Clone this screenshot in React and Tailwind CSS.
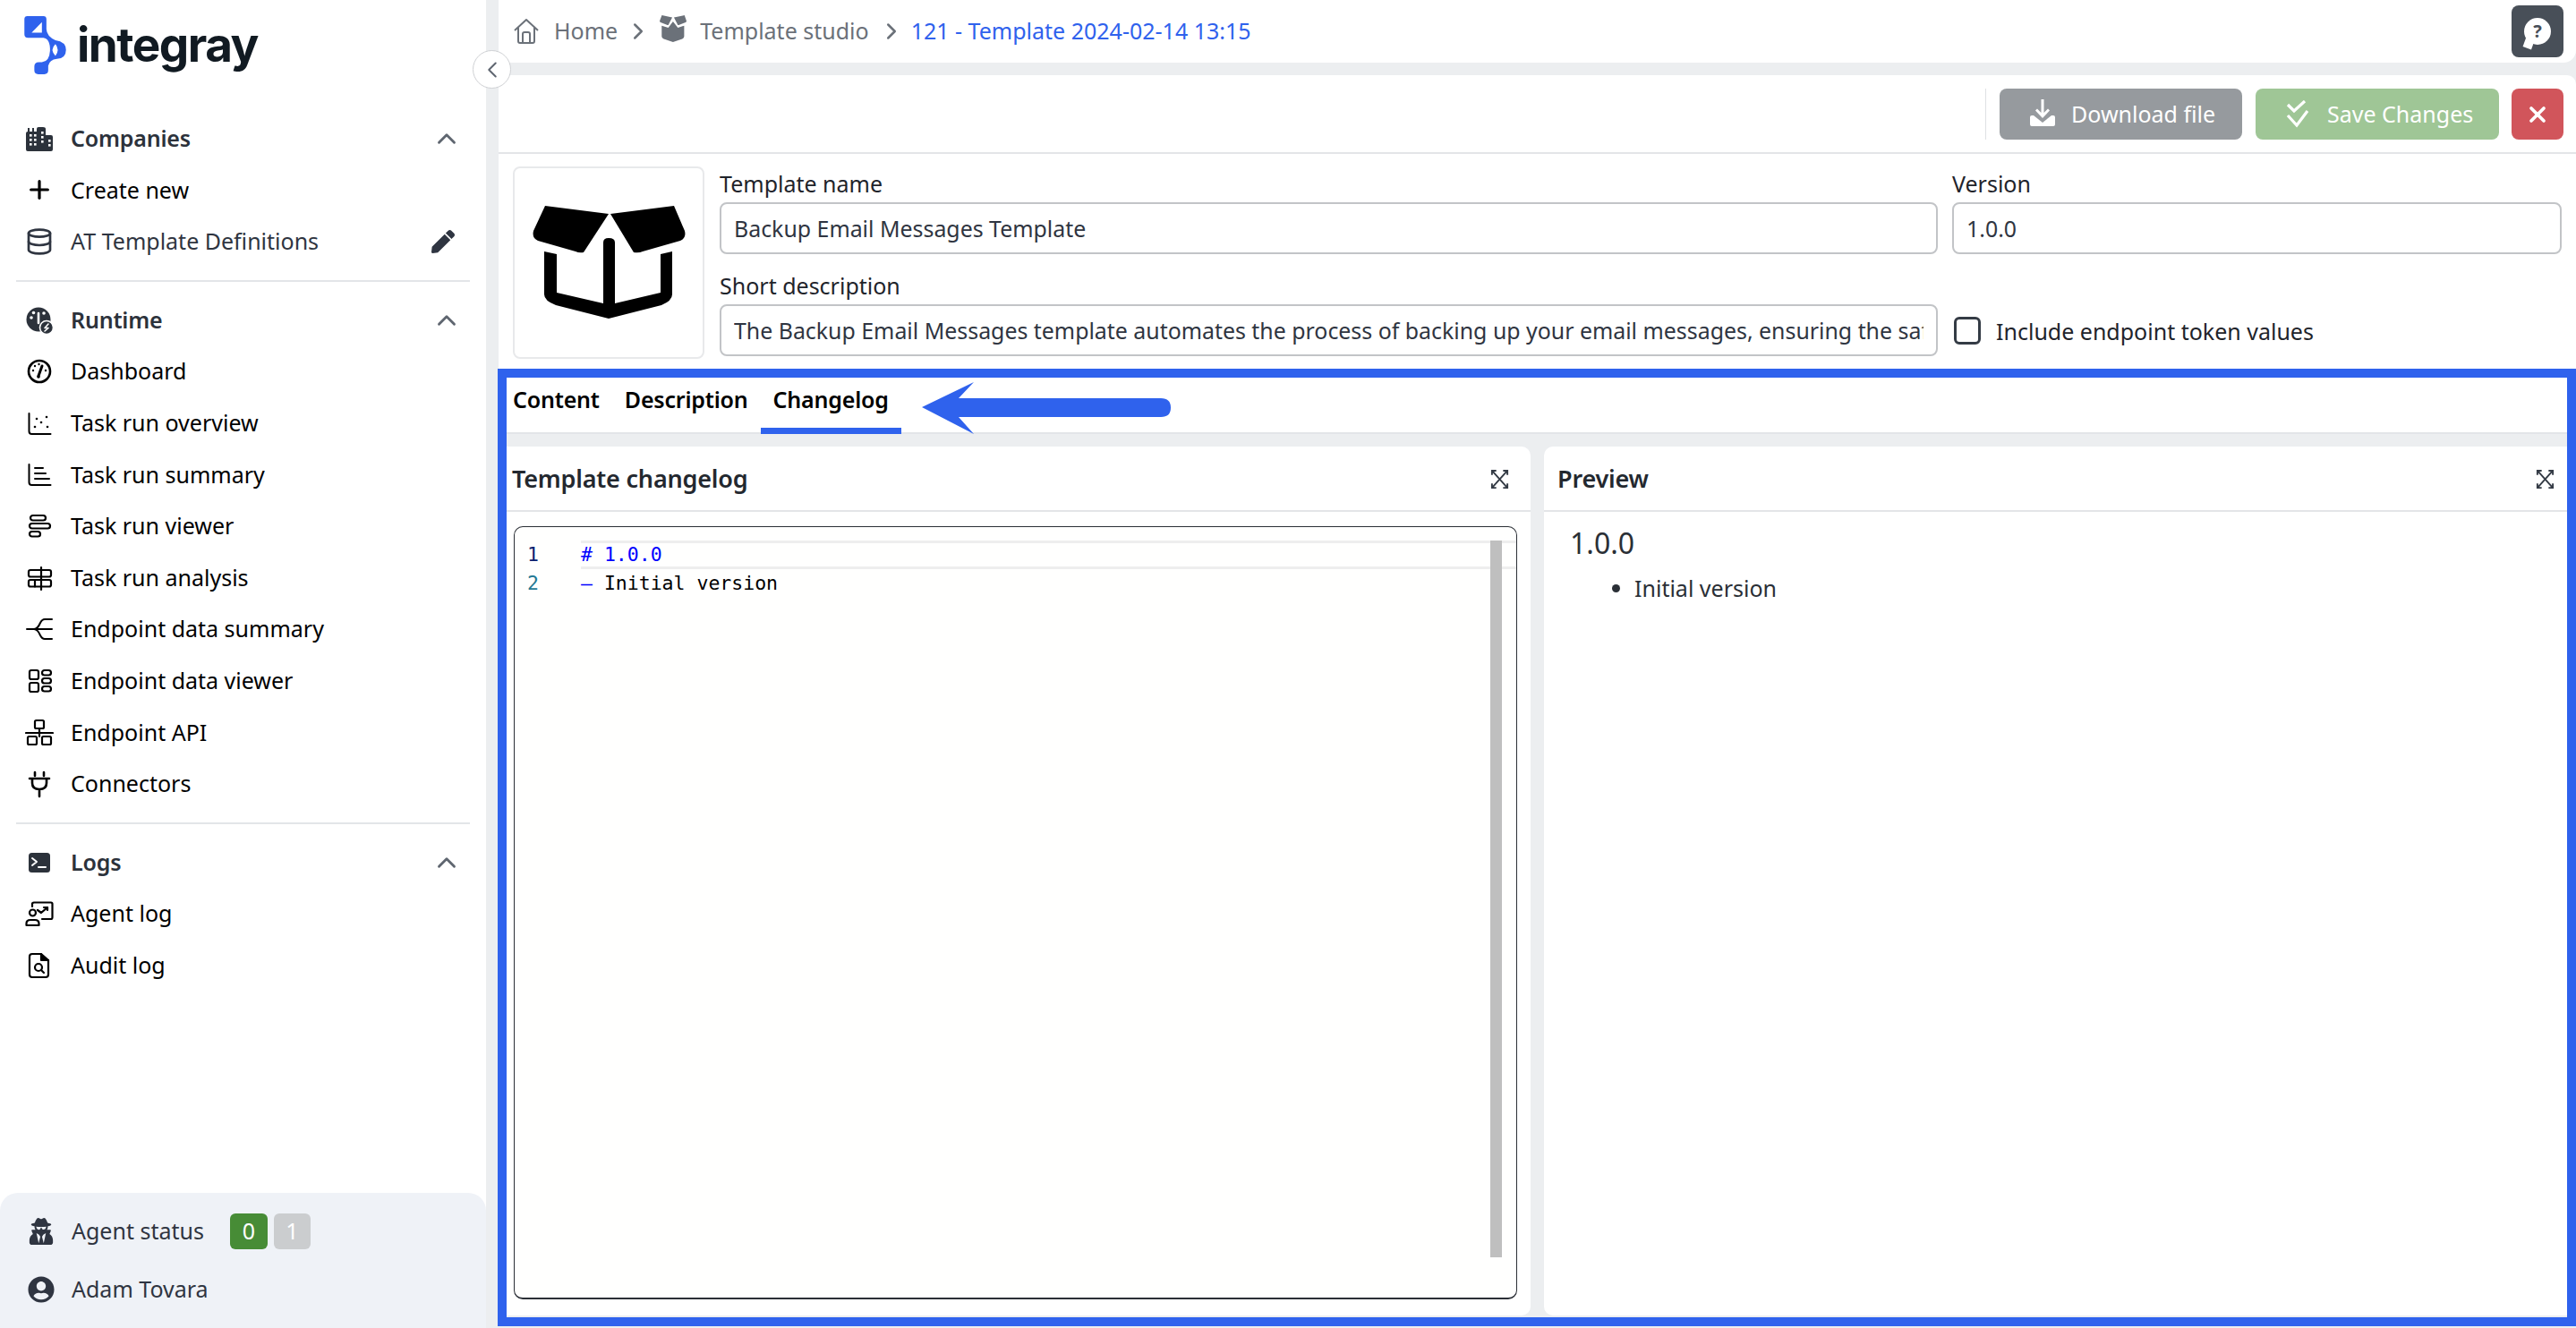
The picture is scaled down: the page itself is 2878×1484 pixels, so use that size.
import React from "react";
import { ChevronLeft, ChevronRight, ChevronUp, Database, Plus, X } from "lucide-react";
import { FaPen, FaUserCircle, FaUserSecret } from "react-icons/fa";

const BLUE = "#2f62ed";

// icons all sit in a 32 box so the labels line up
const Svg = ({ children, className = "w-8 h-8" }) => (
  <svg viewBox="0 0 32 32" className={`${className} shrink-0`} fill="none" stroke="currentColor" strokeWidth="2.2" strokeLinecap="round" strokeLinejoin="round">
    {children}
  </svg>
);

const CompaniesIcon = () => {
  const dots = [[5, 11], [10, 11], [5, 16], [10, 16], [5, 21], [10, 21], [18, 8], [18, 13], [18, 18], [26, 17], [26, 22]];
  return (
    <Svg>
      <path stroke="none" fill="currentColor" d="M1 28V10Q1 8 3 8H3V4H5V8H8V4H10V8H13V5Q13 3 15 3H20Q23 3 23 5V12H29Q31 12 31 14V28Q31 30 29 30H3Q1 30 1 28Z" />
      {dots.map(([x, y]) => (
        <rect key={`${x}-${y}`} x={x} y={y} width="2.6" height="2.6" fill="#fff" stroke="none" />
      ))}
    </Svg>
  );
};

const RuntimeIcon = () => (
  <Svg>
    <circle cx="15" cy="15" r="13.5" fill="currentColor" stroke="none" />
    <path d="M15 8V19" stroke="#fff" strokeWidth="2.6" />
    <circle cx="7" cy="13" r="1.8" fill="#fff" stroke="none" />
    <circle cx="9.5" cy="7.5" r="1.8" fill="#fff" stroke="none" />
    <circle cx="21" cy="8" r="1.8" fill="#fff" stroke="none" />
    <circle cx="24" cy="24" r="7.5" fill="currentColor" stroke="#fff" strokeWidth="1.6" />
    <path d="M26 20 22 24.500H26L22 28" stroke="#fff" strokeWidth="1.6" />
  </Svg>
);

const DashboardIcon = () => (
  <Svg>
    <circle cx="16" cy="16" r="12" strokeWidth="2.6" />
    <path d="M15 21 19 10" strokeWidth="3" />
    <circle cx="15" cy="22" r="1.8" fill="currentColor" stroke="none" />
    <circle cx="9" cy="15" r="1.2" fill="currentColor" stroke="none" />
    <circle cx="11" cy="10" r="1.2" fill="currentColor" stroke="none" />
    <circle cx="15.500" cy="8" r="1.2" fill="currentColor" stroke="none" />
    <circle cx="23" cy="15" r="1.2" fill="currentColor" stroke="none" />
  </Svg>
);

const OverviewIcon = () => (
  <Svg>
    <path d="M4.500 5V25Q4.500 28 7.500 28H28.500" strokeWidth="2" />
    <g fill="currentColor" stroke="none">
      <circle cx="13" cy="11" r="1.300" /><circle cx="24" cy="9" r="1.300" /><circle cx="18" cy="15" r="1.300" />
      <circle cx="11" cy="20" r="1.300" /><circle cx="25" cy="20" r="1.300" />
    </g>
  </Svg>
);

const SummaryIcon = () => (
  <Svg>
    <path d="M4.500 5V25Q4.500 28 7.500 28H28.500" strokeWidth="2" />
    <path d="M11 9H20M11 15H23M11 21H27" strokeWidth="2" />
  </Svg>
);

const ViewerIcon = () => (
  <Svg>
    <rect x="6" y="4" width="17" height="5.500" rx="2.750" />
    <rect x="5" y="13" width="23" height="5.500" rx="2.750" />
    <rect x="5" y="22" width="12" height="5.500" rx="2.750" />
  </Svg>
);

const AnalysisIcon = () => (
  <Svg>
    <rect x="4" y="7" width="25" height="7.500" rx="2" />
    <rect x="4" y="18" width="25" height="7.500" rx="2" />
    <path d="M18 4V29M11 18V25.500" />
  </Svg>
);

const DataSummaryIcon = () => (
  <Svg>
    <path d="M2 16H30M30 5H22Q19 5 17 9 14 16 10 16 14 16 17 23 19 27 22 27H30" strokeWidth="2" />
  </Svg>
);

const DataViewerIcon = () => (
  <Svg>
    <rect x="5" y="4" width="10" height="10" rx="2" />
    <rect x="5" y="18" width="10" height="10" rx="2" />
    <rect x="19" y="4" width="10" height="5.500" rx="2.750" />
    <rect x="19" y="13" width="10" height="5.500" rx="2.750" />
    <rect x="19" y="22" width="10" height="5.500" rx="2.750" />
  </Svg>
);

const ApiIcon = () => (
  <Svg>
    <rect x="11" y="3" width="10" height="9" rx="1.500" />
    <rect x="3" y="21" width="10" height="9" rx="1.500" />
    <rect x="19" y="21" width="10" height="9" rx="1.500" />
    <path d="M16 12V21M1 17H31" />
  </Svg>
);

const PlugIcon = () => (
  <Svg>
    <path d="M11 3V7M21 3V7M5 10H27M8 10V15Q8 22 16 22 24 22 24 15V10M16 22V30" strokeWidth="2.600" />
  </Svg>
);

const TerminalIcon = () => (
  <Svg>
    <rect x="4" y="5" width="24" height="22" rx="3.500" fill="currentColor" stroke="none" />
    <path d="M8 11 13 15 8 19M15 21H23" stroke="#fff" strokeWidth="2" />
  </Svg>
);

const AgentLogIcon = () => (
  <Svg>
    <circle cx="8.500" cy="15" r="3.500" />
    <path d="M1.500 29V27Q1.500 23 6 23H11Q15.500 23 15.500 27V29Z" />
    <path d="M8 8V5Q8 3.500 10 3.500H29Q30.500 3.500 30.500 5V20Q30.500 22 29 22H19" />
    <path d="M14 12 18 15 25 9M21 9H25V12" />
  </Svg>
);

const AuditIcon = () => (
  <Svg>
    <path d="M8 3H18L26 10V26Q26 29 23 29H8Q5 29 5 26V6Q5 3 8 3Z" />
    <path d="M18 3V10H26" fill="currentColor" />
    <circle cx="15" cy="18" r="4" />
    <path d="M18 21 21 24" />
  </Svg>
);

const ExpandIcon = () => (
  <svg viewBox="0 0 24 24" className="w-[23px] h-[23px]" fill="none" stroke="#343b45" strokeWidth="2">
    <path d="M3 7V2H8M16 2H21V7M21 17V22H16M8 22H3V17M3 2 21 22M21 2 3 22" />
  </svg>
);

// open box used for the template picture
const BoxIcon = ({ className, fill }) => (
  <svg viewBox="0 0 171 126" className={className} fill={fill}>
    <path d="M14 0 85 9 57 52 Q52 53 48 51 L6 39 Q-1 36 1 28Z" />
    <path d="M87 9 158 0 170 28 Q172 36 165 39 L123 51 Q119 53 113 52Z" />
    <path d="M13 51V99Q13 106 26 111L85 126 144 111Q156 106 156 99V51L143 54V97L92 109V41Q92 36 85 36 79 36 79 41V109L27 97V54Z" />
  </svg>
);

// breadcrumb version: same flaps, solid body
const SmallBoxIcon = () => (
  <svg viewBox="0 0 171 170" className="w-[30px] h-[30px]" fill="#6b7179">
    <path d="M14 0 80 14 55 62 Q50 63 46 61 L6 45 Q-1 42 1 34Z" />
    <path d="M91 14 158 0 170 34 Q172 42 165 45 L125 61 Q121 63 116 62Z" />
    <path d="M13 66 L55 80 85 40 116 80 156 66V135Q156 145 144 150L85 170 26 150Q13 145 13 135Z" />
  </svg>
);

const LogoMark = () => (
  <svg viewBox="22 25 138 193" className="w-[47px] h-[65px] shrink-0">
    <path fill={BLUE} d="M32 25H85Q95 25 95 35V68Q96 92 125 105 160 110 160 137 160 165 130 167 105 170 101 190V205Q101 218 88 218H68Q55 218 55 205V192Q55 178 70 178H80Q105 176 107 140 108 100 85 97H34Q22 97 22 85V35Q22 25 32 25Z" />
    <path fill="#fff" d="M46 80 80 45V80Z" />
    <path fill="#fff" d="M125 118Q105 137 125 157 140 137 125 118Z" />
  </svg>
);

const Section = ({ icon, label }) => (
  <div className="flex items-center h-[57.6px] pl-[28px] text-[#2c323b]">
    {icon}
    <span className="ml-[19px] font-semibold tracking-[-0.2px]">{label}</span>
    <ChevronUp className="ml-auto mr-[27px] w-[34px] h-[34px] text-[#5f6670]" strokeWidth={2} />
  </div>
);

const Item = ({ icon, label, muted, children }) => (
  <div className={`flex items-center h-[57.6px] pl-[28px] ${muted ? "text-[#2f3541]" : "text-black"}`}>
    {icon}
    <span className="ml-[19px]">{label}</span>
    {children}
  </div>
);

const Divider = () => <div className="mx-[18px] h-[2px] bg-[#e3e5e8] my-[14px]" />;

function Sidebar() {
  return (
    <aside className="w-[543px] shrink-0 h-full bg-white flex flex-col text-[25px]">
      <div className="h-[126px] shrink-0 flex items-start pl-[27px] pt-[18px] gap-[12px]">
        <LogoMark />
        <span className="font-['Inter',sans-serif] font-bold text-[53px] leading-[64px] text-[#111a22] tracking-[-1.5px]">integray</span>
      </div>
      <Section icon={<CompaniesIcon />} label="Companies" />
      <Item icon={<Plus className="w-8 h-8" strokeWidth={2.4} />} label="Create new" />
      <Item muted icon={<Database className="w-8 h-8" strokeWidth={2} />} label="AT Template Definitions">
        <FaPen className="ml-auto mr-[35px] w-[26px] h-[26px] text-[#2f3541]" />
      </Item>
      <Divider />
      <Section icon={<RuntimeIcon />} label="Runtime" />
      <Item icon={<DashboardIcon />} label="Dashboard" />
      <Item icon={<OverviewIcon />} label="Task run overview" />
      <Item icon={<SummaryIcon />} label="Task run summary" />
      <Item icon={<ViewerIcon />} label="Task run viewer" />
      <Item icon={<AnalysisIcon />} label="Task run analysis" />
      <Item icon={<DataSummaryIcon />} label="Endpoint data summary" />
      <Item icon={<DataViewerIcon />} label="Endpoint data viewer" />
      <Item icon={<ApiIcon />} label="Endpoint API" />
      <Item icon={<PlugIcon />} label="Connectors" />
      <Divider />
      <Section icon={<TerminalIcon />} label="Logs" />
      <Item icon={<AgentLogIcon />} label="Agent log" />
      <Item icon={<AuditIcon />} label="Audit log" />
      <div className="mt-auto h-[151px] rounded-t-[20px] bg-[#eff2f7] text-[#2f3541] pl-[31px] pt-[23px]">
        <div className="flex items-center h-[40px]">
          <FaUserSecret className="w-[30px] h-[30px]" />
          <span className="ml-[19px]">Agent status</span>
          <span className="ml-[29px] w-[42px] h-[40px] rounded-[6px] bg-[#478c36] text-white flex items-center justify-center">0</span>
          <span className="ml-[7px] w-[41px] h-[40px] rounded-[6px] bg-[#cbcdcf] text-white flex items-center justify-center">1</span>
        </div>
        <div className="flex items-center h-[40px] mt-[25px]">
          <FaUserCircle className="w-[30px] h-[30px]" />
          <span className="ml-[19px]">Adam Tovara</span>
        </div>
      </div>
    </aside>
  );
}

const Crumb = () => <ChevronRight className="w-[30px] h-[30px] mx-[2px] text-[#6b7179]" strokeWidth={2} />;

function TopBar() {
  return (
    <header className="h-[70px] shrink-0 bg-white rounded-br-[14px] flex items-center pl-[16px] pr-[14px] text-[25px] text-[#6b7179]">
      <svg viewBox="0 0 30 32" className="w-[30px] h-[32px]" fill="none" stroke="currentColor" strokeWidth="2" strokeLinejoin="round">
        <path d="M2 15 15 3 28 15M6 12V27Q6 29 8 29H22Q24 29 24 27V12M11 29V19Q11 17 13 17H17Q19 17 19 19V29" />
      </svg>
      <span className="ml-[16px]">Home</span>
      <span className="ml-[6px]"><Crumb /></span>
      <span className="ml-[7px] mb-[6px]"><SmallBoxIcon /></span>
      <span className="ml-[15px]">Template studio</span>
      <span className="ml-[8px]"><Crumb /></span>
      <span className="ml-[5px] text-[#2f62ed]">121 - Template 2024-02-14 13:15</span>
      <button className="ml-auto w-[58px] h-[58px] rounded-[8px] bg-[#484f58] flex items-center justify-center">
        <span className="relative flex w-[30px] h-[30px] rounded-full bg-white items-center justify-center text-[20px] leading-none font-bold text-[#484f58]">
          ?
          <span className="absolute left-0 bottom-[-4px] w-[10px] h-[10px] bg-white rotate-[20deg]" />
        </span>
      </button>
    </header>
  );
}

function Toolbar() {
  return (
    <div className="h-[88px] shrink-0 border-b-2 border-[#e3e5e8] flex justify-end items-start pt-[15px] pr-[14px] text-[25px] text-white">
      <div className="w-px h-[57px] bg-[#dfe1e4] mr-[15px]" />
      <button className="w-[271px] h-[57px] rounded-[8px] bg-[#969a9e] flex items-center pl-[33px]">
        <svg viewBox="0 0 30 32" className="w-[30px] h-[32px] mb-[4px]" fill="#fff">
          <path d="M13.500 1H16.500V16L21 11.500 23 13.500 15 22 7 13.500 9 11.500 13.500 16Z" />
          <path d="M1 21Q1 19 3 19H5L15 27 25 19H27Q29 19 29 21V29Q29 31 27 31H3Q1 31 1 29Z" />
        </svg>
        <span className="ml-[17px]">Download file</span>
      </button>
      <button className="ml-[15px] w-[272px] h-[57px] rounded-[8px] bg-[#9fc696] flex items-center pl-[34px]">
        <svg viewBox="0 0 26 32" className="w-[26px] h-[32px]" fill="none" stroke="#fff" strokeWidth="3.200">
          <path d="M2 5 9 12 21 1M2 17 12 28 24 12" />
        </svg>
        <span className="ml-[20px]">Save Changes</span>
      </button>
      <button className="ml-[14px] w-[58px] h-[57px] rounded-[8px] bg-[#d1555b] flex items-center justify-center">
        <X className="w-[28px] h-[28px]" strokeWidth={3.2} />
      </button>
    </div>
  );
}

const Field = ({ label, value }) => (
  <div className="flex flex-col">
    <label className="h-[34px] leading-[27px]">{label}</label>
    <input
      readOnly
      value={value}
      className="h-[58px] w-full rounded-[8px] border-2 border-[#c2c4c7] px-[14px] text-[24.9px] text-[#2f3541] bg-white outline-none"
    />
  </div>
);

function TemplateForm() {
  return (
    <div className="h-[240px] shrink-0 flex pl-[16px] pt-[14px] text-[25px] text-[#1f242b]">
      <div className="w-[214px] h-[215px] rounded-[8px] border-2 border-[#e8e9eb] flex items-center justify-center">
        <BoxIcon className="w-[171px] h-[126px] mt-[-2px]" fill="#000" />
      </div>
      <div className="ml-[17px] grid grid-cols-[1361px_681px] gap-x-[16px] gap-y-[22px] pt-[6px] content-start">
        <Field label="Template name" value="Backup Email Messages Template" />
        <Field label="Version" value="1.0.0" />
        <Field label="Short description" value="The Backup Email Messages template automates the process of backing up your email messages, ensuring the safety and accessibility of your communications." />
        <div className="flex items-center h-[58px] mt-[34px] pl-[2px]">
          <span className="w-[30px] h-[31px] rounded-[6px] border-[3px] border-[#343b45] bg-white" />
          <span className="ml-[17px] mt-[4px]">Include endpoint token values</span>
        </div>
      </div>
    </div>
  );
}

function Tabs() {
  const tabs = ["Content", "Description", "Changelog"];
  return (
    <div className="h-[73px] shrink-0 bg-white border-b-2 border-[#e3e5e8] flex pl-[2px] text-[25px] font-semibold tracking-[-0.2px] text-black">
      {tabs.map((t) => (
        <div
          key={t}
          className={`h-[73px] px-[14px] pt-[4px] flex items-center border-b-[7px] ${t === "Changelog" ? "border-[#2f62ed]" : "border-transparent"}`}
        >
          {t}
        </div>
      ))}
    </div>
  );
}

const PanelHead = ({ title }) => (
  <div className="h-[73px] shrink-0 border-b-2 border-[#e3e5e8] flex items-center justify-between pl-[15px] pr-[23px] pt-[2px] text-[27px] font-semibold tracking-[-0.2px] text-[#23282f]">
    <span>{title}</span>
    <ExpandIcon />
  </div>
);

function Editor() {
  return (
    <div className="relative flex-1 mt-[16px] ml-[17px] mr-[15px] mb-[18px] rounded-[10px] border border-b-2 border-[#2b2f36] bg-[#fffffe] pt-[15px] font-['DejaVu_Sans_Mono',monospace] text-[21.5px]">
      <div className="flex h-[32px] items-center">
        <span className="w-[74px] pl-[14px] shrink-0 text-[#0b216f]">1</span>
        <span className="flex-1 h-[32px] leading-[26px] border-y-[3px] border-[#eeeeee] text-[#0000ff] whitespace-pre"># 1.0.0</span>
      </div>
      <div className="flex h-[32px] items-center">
        <span className="w-[74px] pl-[14px] shrink-0 text-[#237893]">2</span>
        <span className="whitespace-pre"><span className="text-[#0000ff]">–</span> Initial version</span>
      </div>
      <div className="absolute right-[16px] top-[15px] w-[13px] h-[801px] bg-[#bfbfbf]" />
    </div>
  );
}

function ChangelogPanels() {
  return (
    <div className="mt-[14px] h-[971px] shrink-0 flex gap-[15px]">
      <section className="w-[1153px] bg-white rounded-[10px] flex flex-col">
        <PanelHead title="Template changelog" />
        <Editor />
      </section>
      <section className="flex-1 bg-white rounded-[10px] flex flex-col">
        <PanelHead title="Preview" />
        <div className="pl-[29px] pt-[15px] text-[#2a2f36]">
          <h1 className="text-[32px] leading-[40px]">1.0.0</h1>
          <ul className="mt-[13px] list-disc pl-[72px] text-[25px] leading-[34px]">
            <li>Initial version</li>
          </ul>
        </div>
      </section>
    </div>
  );
}

export default function App() {
  return (
    <div className="relative w-[2878px] h-[1484px] flex overflow-hidden bg-[#eceef0] font-['Noto_Sans',sans-serif]">
      <Sidebar />
      <main className="ml-[14px] flex-1 min-w-0 flex flex-col">
        <TopBar />
        <div className="mt-[14px] bg-white rounded-t-[10px] shrink-0">
          <Toolbar />
          <TemplateForm />
          <Tabs />
        </div>
        <ChangelogPanels />
      </main>

      {/* collapse handle sits over the gutter */}
      <button className="absolute left-[528px] top-[56px] w-[43px] h-[43px] rounded-full bg-white border border-[#cfd1d4] flex items-center justify-center text-[#5f6670]">
        <ChevronLeft className="w-[30px] h-[30px]" strokeWidth={1.6} />
      </button>

      {/* annotation drawn on top of the screenshot */}
      <div className="absolute left-[556px] top-[412px] w-[2322px] h-[1070px] border-[10px] border-[#2f62ed] pointer-events-none" />
      <svg viewBox="0 0 278 58" className="absolute left-[1030px] top-[427px] w-[278px] h-[58px]">
        <path fill={BLUE} d="M0 28 58 0 41 18H267Q278 18 278 28.500 278 39 267 39H41L58 58Z" />
      </svg>
    </div>
  );
}
